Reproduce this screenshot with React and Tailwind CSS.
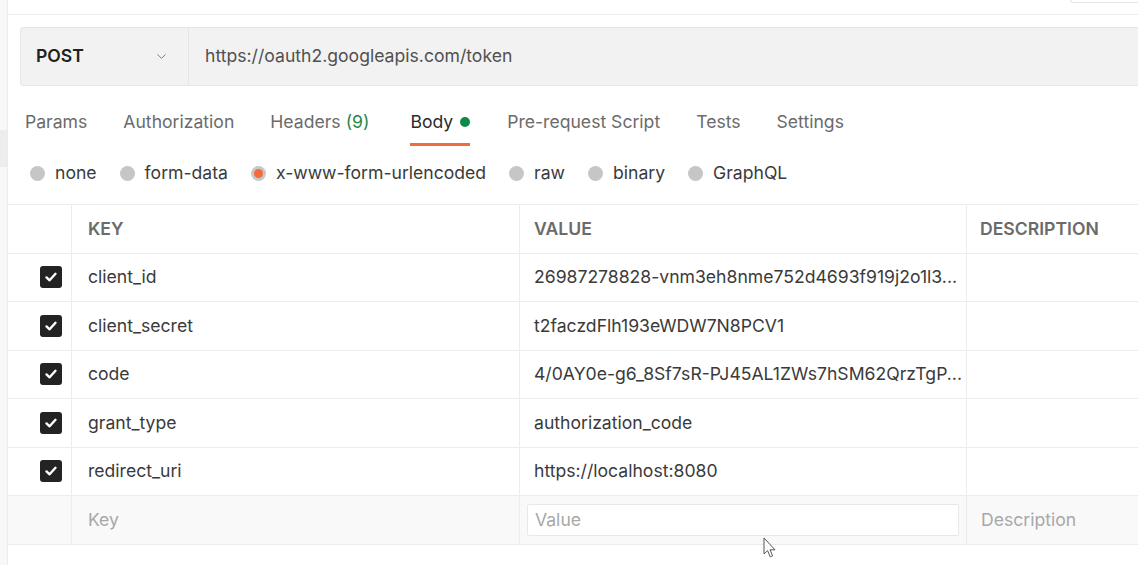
import { ChevronDown } from "lucide-react";

const TABS = [
  { label: "Params" },
  { label: "Authorization" },
  { label: "Headers", count: "(9)" },
  { label: "Body", active: true },
  { label: "Pre-request Script" },
  { label: "Tests" },
  { label: "Settings" },
];

const BODY_TYPES = [
  { label: "none" },
  { label: "form-data" },
  { label: "x-www-form-urlencoded", selected: true },
  { label: "raw" },
  { label: "binary" },
  { label: "GraphQL" },
];

const ROWS = [
  { key: "client_id", value: "26987278828-vnm3eh8nme752d4693f919j2o1l3..." },
  { key: "client_secret", value: "t2faczdFlh193eWDW7N8PCV1" },
  { key: "code", value: "4/0AY0e-g6_8Sf7sR-PJ45AL1ZWs7hSM62QrzTgP..." },
  { key: "grant_type", value: "authorization_code" },
  { key: "redirect_uri", value: "https://localhost:8080" },
];

function CheckBox() {
  return (
    <div className="w-[22px] h-[22px] rounded-[3px] bg-[#232323] flex items-center justify-center">
      <svg width="14" height="14" viewBox="0 0 14 14" fill="none">
        <path d="M2.5 7.4 L5.6 10.3 L11.5 3.8" stroke="white" strokeWidth="2.4" strokeLinecap="round" strokeLinejoin="round" />
      </svg>
    </div>
  );
}

export default function App() {
  return (
    <div className="relative flex h-[565px] w-[1138px] overflow-hidden bg-white font-['Inter','Liberation_Sans',sans-serif] text-[17.6px]">
      {/* left sidebar edge */}
      <div className="w-[8px] shrink-0 bg-[#f8f8f8] border-r border-[#ebebeb] flex flex-col">
        <div className="h-[130px]" />
        <div className="h-[37px] bg-[#ededed]" />
      </div>

      <div className="flex-1 flex flex-col min-w-0">
        {/* top strip */}
        <div className="h-[15px] border-b border-[#ececec] flex justify-end">
          <div className="w-[68px] h-[3px] border-b border-l border-[#e4e4e4] rounded-bl-[3px]" />
        </div>

        {/* url bar */}
        <div className="pl-[12px] pt-[12px]">
          <div className="flex h-[59px] bg-[#f2f2f2] border-y border-l border-[#e6e6e6] rounded-l-[4px]">
            <div className="w-[168px] shrink-0 flex items-center justify-between pl-[15px] pr-[19px] border-r border-[#e6e6e6]">
              <span className="font-semibold text-[#212121]">POST</span>
              <ChevronDown size={15} strokeWidth={1.5} className="text-[#777]" />
            </div>
            <div className="flex items-center pl-[16px] text-[#505050]">
              https://oauth2.googleapis.com/token
            </div>
          </div>
        </div>

        {/* tabs */}
        <div className="flex gap-[36px] pl-[17px] pt-[10px] leading-[26px] text-[#6b6b6b]">
          {TABS.map((t) => (
            <div
              key={t.label}
              className={`flex items-center gap-[7px] pt-[13px] pb-[8px] border-b-[3px] ${
                t.active ? "ml-[5px] mr-[1px] border-[#f26b3a] text-[#2b2b2b]" : "border-transparent"
              }`}
            >
              <span>{t.label}</span>
              {t.count && <span className="text-[#1f8a4a] -ml-[2px]">{t.count}</span>}
              {t.active && <span className="w-[10px] h-[10px] rounded-full bg-[#0b8a4a]" />}
            </div>
          ))}
        </div>

        {/* body type radios */}
        <div className="flex items-center gap-[23px] pl-[22px] h-[58px] pb-[3px] text-[#3a3a3a]">
          {BODY_TYPES.map((b) => (
            <div key={b.label} className="flex items-center gap-[10px]">
              {b.selected ? (
                <span className="w-[15px] h-[15px] rounded-full bg-[#c8c8c8] flex items-center justify-center">
                  <span className="w-[9px] h-[9px] rounded-full bg-[#f26b3a]" />
                </span>
              ) : (
                <span className="w-[15px] h-[15px] rounded-full bg-[#c6c6c6]" />
              )}
              <span>{b.label}</span>
            </div>
          ))}
        </div>

        {/* key/value table */}
        <div className="border-t border-[#ececec]">
          <div className="flex h-[48.5px] border-b border-[#ececec] font-semibold text-[#6b6b6b]">
            <div className="w-[64px] shrink-0 border-r border-[#ececec]" />
            <div className="w-[448px] shrink-0 flex items-center pl-[16px] border-r border-[#ececec]">KEY</div>
            <div className="w-[447px] shrink-0 flex items-center pl-[14px] border-r border-[#ececec]">VALUE</div>
            <div className="flex-1 flex items-center pl-[13px] whitespace-nowrap">DESCRIPTION</div>
          </div>
          {ROWS.map((r) => (
            <div key={r.key} className="flex h-[48.5px] border-b border-[#ececec] text-[#3a3a3a]">
              <div className="w-[64px] shrink-0 flex items-center pl-[32px] border-r border-[#ececec]">
                <CheckBox />
              </div>
              <div className="w-[448px] shrink-0 flex items-center pl-[16px] border-r border-[#ececec]">{r.key}</div>
              <div className="w-[447px] shrink-0 flex items-center pl-[14px] border-r border-[#ececec] whitespace-nowrap overflow-hidden">
                {r.value}
              </div>
              <div className="flex-1" />
            </div>
          ))}
          <div className="flex h-[48.5px] border-b border-[#ececec] bg-[#f9f9f9] text-[#a8a8a8]">
            <div className="w-[64px] shrink-0 border-r border-[#ececec]" />
            <div className="w-[448px] shrink-0 flex items-center pl-[16px] border-r border-[#ececec]">Key</div>
            <div className="w-[447px] shrink-0 flex items-center px-[7px] border-r border-[#ececec]">
              <div className="w-full h-[32px] bg-white border border-[#e8e8e8] rounded-[2px] flex items-center pl-[7px]">
                Value
              </div>
            </div>
            <div className="flex-1 flex items-center pl-[14px]">Description</div>
          </div>
        </div>
      </div>

      {/* mouse cursor */}
      <svg className="absolute left-[763px] top-[537px]" width="14" height="22" viewBox="0 0 14 22" fill="none">
        <path d="M1 1 L1 17 L4.6 13.6 L7.2 19.8 L9.6 18.8 L7 12.8 L12 12.8 Z" fill="white" stroke="#555" strokeWidth="1" strokeLinejoin="round" />
      </svg>
    </div>
  );
}
